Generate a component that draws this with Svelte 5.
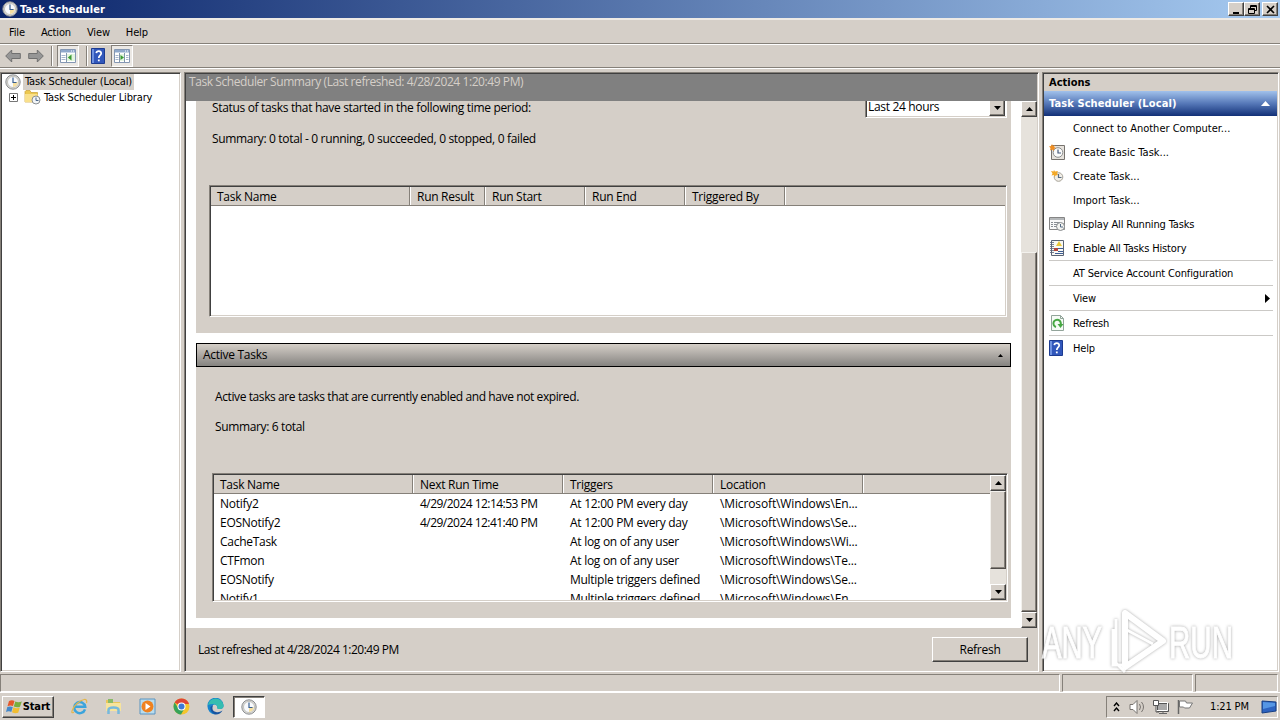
<script>
    const menus = ['File', 'Action', 'View', 'Help'];

    const historyColumns = [
        { label: 'Task Name', width: 200 },
        { label: 'Run Result', width: 75 },
        { label: 'Run Start', width: 100 },
        { label: 'Run End', width: 100 },
        { label: 'Triggered By', width: 100 }
    ];

    const activeColumns = [
        { label: 'Task Name', width: 200 },
        { label: 'Next Run Time', width: 150 },
        { label: 'Triggers', width: 150 },
        { label: 'Location', width: 150 }
    ];

    const tasks = [
        ['Notify2', '4/29/2024 12:14:53 PM', 'At 12:00 PM every day', '\\Microsoft\\Windows\\En...'],
        ['EOSNotify2', '4/29/2024 12:41:40 PM', 'At 12:00 PM every day', '\\Microsoft\\Windows\\Se...'],
        ['CacheTask', '', 'At log on of any user', '\\Microsoft\\Windows\\Wi...'],
        ['CTFmon', '', 'At log on of any user', '\\Microsoft\\Windows\\Te...'],
        ['EOSNotify', '', 'Multiple triggers defined', '\\Microsoft\\Windows\\Se...'],
        ['Notify1', '', 'Multiple triggers defined', '\\Microsoft\\Windows\\En...']
    ];

    const actions = [
        { label: 'Connect to Another Computer...' },
        { label: 'Create Basic Task...', icon: 'basic' },
        { label: 'Create Task...', icon: 'create' },
        { label: 'Import Task...' },
        { label: 'Display All Running Tasks', icon: 'running' },
        { label: 'Enable All Tasks History', icon: 'history' },
        { label: 'AT Service Account Configuration', line: true },
        { label: 'View', line: true, submenu: true },
        { label: 'Refresh', line: true, icon: 'refresh' },
        { label: 'Help', line: true, icon: 'help' }
    ];

    const launchers = ['ie', 'explorer', 'media', 'chrome', 'edge'];
</script>

{#snippet clock()}
    <svg width="16" height="16" viewBox="0 0 16 16">
        <circle cx="8" cy="8" r="7.2" fill="#d9d9d6" stroke="#8b8d90" />
        <circle cx="8" cy="8" r="5.5" fill="#f8fafd" stroke="#b9b8b0" stroke-width=".8" />
        <path d="M8 8h4.8A5 5 0 0 1 8 13z" fill="#f5dfa0" />
        <path d="M8 3.5V8.5H11.5" fill="none" stroke="#395f91" stroke-width="1.2" />
    </svg>
{/snippet}

{#snippet help()}
    <svg width="14" height="16" viewBox="1 0 14 16">
        <path d="M1.5.5h13v15h-13z" fill="#3157bb" stroke="#1c3b91" />
        <path d="M2 1h2v14H2z" fill="#6e91e0" />
        <path d="M6.3 5.2C6.6 2.5 11.3 2.5 11.2 5.4 11.1 7.6 8.8 7.4 8.8 10" fill="none" stroke="#fff" stroke-width="1.7" />
        <path d="M7.9 11.5h1.8v1.8H7.9z" fill="#fff" />
    </svg>
{/snippet}

{#snippet panel(right)}
    <svg width="16" height="14" viewBox="0 0 16 14">
        <path d="M.5.5h15v13H.5z" fill="#fff" stroke="#8497b3" />
        <path d="M1 1h14v2.5H1z" fill="#8fa8cb" />
        <path d="M11 2h1m1 0h1" stroke="#fff" />
        {#if right}
            <path d="M5.5 4v9M10.5 4v9" stroke="#8195ac" />
            <path d="M1.5 6.5h3m-3 2h3m-3 2h3M12 6.5h2.5m-2.5 2h2.5m-2.5 2h2.5" stroke="#a5b5cc" />
            <path d="M6 5h4v7H6z" fill="#e3f5df" /><path d="M6.5 6v5L10 8.5z" fill="#3b9a35" />
        {:else}
            <path d="M6.5 4v9" stroke="#8195ac" />
            <path d="M1.5 6.5h4m-4 2h4m-4 2h4" stroke="#a5b5cc" />
            <path d="M7 5h8v7H7z" fill="#e3f5df" /><path d="M11.5 5.5v6L7.8 8.5z" fill="#3b9a35" />
        {/if}
    </svg>
{/snippet}

{#snippet arrow(dir)}
    <svg width="7" height="4" viewBox="0 0 7 4">
        <path d={dir === 'up' ? 'M0 4h7L3.5 0z' : 'M0 0h7L3.5 4z'} />
    </svg>
{/snippet}

{#snippet actionIcon(name)}
    {#if name === 'help'}
        {@render help()}
    {:else if name}
        <svg width="16" height="16" viewBox="0 0 16 16">
            {#if name === 'basic'}
                <path d="M2.5 1.5h13v14h-13z" fill="#e6e2dc" stroke="#77736e" />
                <circle cx="9" cy="8.5" r="4.8" fill="#fbfbfa" stroke="#8a8c8c" />
                <path d="M9 5.5V9h3" fill="none" stroke="#44597a" stroke-width="1.2" />
                <path d="M3 0l1 2 2-1-1 2 2 1-2 1v2L3 5.500 1 6.500 1.500 4 0 2.500 2 2z" fill="#f08e22" />
            {:else if name === 'create'}
                <circle cx="9.500" cy="9" r="4.300" fill="#f1eee7" stroke="#a7a398" />
                <path d="M9.500 6v3.500h3" fill="none" stroke="#566b83" stroke-width="1.200" />
                <path d="M5 2l1 1.500L9 3 8 5l1 2-2.500.5L5.500 9 5 7l-2.500.5 1-2L2 3l2.500.5z" fill="#f3a928" />
            {:else if name === 'running'}
                <path d="M.5 1.500h15v12H.5z" fill="#f8f8f8" stroke="#858585" />
                <path d="M1 2h14v2H1z" fill="#b5b8ba" />
                <path d="M2 6.500h2m1 0h6M2 8.500h2m1 0h4M2 10.500h2m1 0h3" stroke="#888d92" />
                <circle cx="11.500" cy="10.500" r="4" fill="#f3f3f0" stroke="#85898c" />
                <path d="M11.500 8v3H14" fill="none" stroke="#536a84" />
            {:else if name === 'history'}
                <path d="M2.500.5h12v15h-12z" fill="#f8f8f4" stroke="#596374" />
                <path d="M1 2.500h4m-4 2h4m-4 2h4m-4 2h4m-4 2h4m-4 2h4" stroke="#59647a" stroke-width=".8" />
                <path d="M10 1l3 5H7z" fill="#e9c737" /><path d="M5 8h4v3H5z" fill="#b34639" />
                <path d="M9 8.500h5m-5 3h5m-8 2h8" stroke="#3e5d94" />
            {:else}
                <path d="M2.500.5h9l3 3v12h-12z" fill="#f6fbf6" stroke="#92a49a" />
                <path d="M11.500.5v3h3" fill="none" stroke="#92a49a" />
                <path d="M7 12A3.700 3.700 0 1 1 11.500 10" fill="none" stroke="#46a743" stroke-width="2" />
                <path d="M8.500 9h6l-3 4z" fill="#46a743" />
            {/if}
        </svg>
    {/if}
{/snippet}

<div class="desktop">
    <header class="titlebar">
        {@render clock()}
        <b>Task Scheduler</b>
        <div class="window-buttons">
            <button aria-label="Minimize"><svg width="9" height="9"><path d="M1 7h6v2H1z" /></svg></button>
            <button aria-label="Restore">
                <svg width="9" height="9"><path d="M2.500 3V.5h6v5H6M2 1.500h7M.5 3.500h6v5h-6zM0 4.500h7" fill="none" stroke="#000" /></svg>
            </button>
            <button class="close" aria-label="Close"><svg width="9" height="9"><path d="M1 1l7 7M8 1L1 8" stroke="#000" stroke-width="1.600" /></svg></button>
        </div>
    </header>

    <nav class="menu">
        {#each menus as menu}<span>{menu}</span>{/each}
    </nav>

    <div class="toolbar">
        <svg width="16" height="14" viewBox="0 0 16 14"><path d="M.7 7l6-6v3.500h8.600v5H6.700V13z" fill="#969696" stroke="#707070" /></svg>
        <svg class="forward" width="16" height="14" viewBox="0 0 16 14"><path d="M15.300 7l-6-6v3.500H.7v5h8.600V13z" fill="#969696" stroke="#707070" /></svg>
        <i></i>
        <span class="pressed">{@render panel(false)}</span>
        <i></i>
        <span class="help-tool">{@render help()}</span>
        <span class="pressed">{@render panel(true)}</span>
    </div>

    <main>
        <aside class="tree sunken">
            <div class="tree-row root">{@render clock()}<span>Task Scheduler (Local)</span></div>
            <div class="tree-row child">
                <svg width="9" height="9"><path d="M.5.5h8v8h-8z" fill="#fff" stroke="#777" /><path d="M2 4.500h5M4.500 2v5" stroke="#000" /></svg>
                <svg class="folder" width="17" height="16" viewBox="0 0 17 16">
                    <path d="M1 13V2.500l1-1h4l1 2h6.500V13z" fill="#ecc84f" stroke="#c89e35" stroke-width=".7" />
                    <path d="M1 5h12.500v8H1z" fill="#f9e08b" />
                    <circle cx="12" cy="11" r="4" fill="#f1f4f6" stroke="#8b9094" />
                    <path d="M12 8.500v3h2.500" fill="none" stroke="#4c678c" />
                </svg>
                <span>Task Scheduler Library</span>
            </div>
        </aside>

        <section class="center sunken">
            <h1>Task Scheduler Summary (Last refreshed: 4/28/2024 1:20:49 PM)</h1>
            <div class="scroll-area">
                <div class="content">
                    <div class="card status">
                        <div class="period">
                            <span>Status of tasks that have started in the following time period:</span>
                            <div class="select"><span>Last 24 hours</span><button aria-label="Open">{@render arrow('down')}</button></div>
                        </div>
                        <p>Summary: 0 total - 0 running, 0 succeeded, 0 stopped, 0 failed</p>
                        <div class="list history">
                            <div class="head">
                                {#each historyColumns as col}<span style:width="{col.width}px">{col.label}</span>{/each}
                            </div>
                        </div>
                    </div>
                    <div class="card-title"><span>Active Tasks</span><svg width="5" height="3"><path d="M0 3h5L2.500 0z" /></svg></div>
                    <div class="card active">
                        <p class="about">Active tasks are tasks that are currently enabled and have not expired.</p>
                        <p class="total">Summary: 6 total</p>
                        <div class="list tasks">
                            <div class="table">
                                <div class="head">
                                    {#each activeColumns as col}<span style:width="{col.width}px">{col.label}</span>{/each}
                                </div>
                                {#each tasks as task}
                                    <div class="row">
                                        {#each task as cell, i}<span style:width="{activeColumns[i].width}px">{cell}</span>{/each}
                                    </div>
                                {/each}
                            </div>
                            <div class="scrollbar">
                                <button aria-label="Up">{@render arrow('up')}</button>
                                <div class="thumb small"></div>
                                <div class="space"></div>
                                <button aria-label="Down">{@render arrow('down')}</button>
                            </div>
                        </div>
                    </div>
                </div>
                <div class="scrollbar">
                    <button aria-label="Up">{@render arrow('up')}</button>
                    <div class="space"></div>
                    <div class="thumb large"></div>
                    <button aria-label="Down">{@render arrow('down')}</button>
                </div>
            </div>
            <footer><span>Last refreshed at 4/28/2024 1:20:49 PM</span><button>Refresh</button></footer>
        </section>

        <aside class="actions sunken">
            <h2>Actions</h2>
            <h3><span>Task Scheduler (Local)</span><svg width="9" height="5"><path d="M0 5h9L4.500 0z" fill="#fff" /></svg></h3>
            {#each actions as action}
                <div class="action" class:line={action.line} class:dialog={action.label.endsWith('...')}>
                    <span class="icon">{@render actionIcon(action.icon)}</span>
                    <span>{action.label}</span>
                    {#if action.submenu}<svg class="submenu" width="5" height="9"><path d="M0 0v9l5-4.500z" /></svg>{/if}
                </div>
            {/each}
        </aside>
    </main>

    <div class="statusbar"><span></span><span></span><span></span></div>

    <div class="taskbar">
        <button class="start">
            <svg width="17" height="16" viewBox="0 0 17 16">
                <path d="M3 2Q6 .5 8.500 2L7 7Q4.500 6 1.500 7.200z" fill="#e5582a" />
                <path d="M9.300 2.400Q12 4 15.800 2.500L14 7.800Q11 9 7.800 7.500z" fill="#78ae3d" />
                <path d="M1.300 8Q4 7 6.800 8L5.300 13Q3 11.500 0 13z" fill="#4488ca" />
                <path d="M7.500 8.300Q10.500 9.800 13.800 8.600L12.200 13.800Q9 15 6 13.300z" fill="#f1bd31" />
            </svg>
            <b>Start</b>
        </button>
        <div class="launchers">
            {#each launchers as app}
                <svg width="17" height="17" viewBox="0 0 17 17">
                    {#if app === 'ie'}
                        <path d="M14 11.300A5.500 5.500 0 1 1 14.200 8.800H4" fill="none" stroke="#3ba4dc" stroke-width="2.500" />
                        <path d="M3 14C-1 17 1 10 6 5.500S17-.5 15.500 5" fill="none" stroke="#e3b64c" stroke-width="1.200" />
                    {:else if app === 'explorer'}
                        <path d="M1 2h5l1 2h8v9H1z" fill="#e9c65a" /><path d="M3 1h5v5H3z" fill="#8abb67" />
                        <path d="M1 5h15v8H1z" fill="#f7e49c" />
                        <path d="M3.500 16v-4Q3.500 9.500 8.500 9.500T13.500 12v4" fill="none" stroke="#77b9dc" stroke-width="2.500" />
                    {:else if app === 'media'}
                        <path d="M1 1h15v15H1z" fill="#b9dced" stroke="#5b94c1" />
                        <circle cx="8.500" cy="8.500" r="6" fill="#ef8220" /><path d="M6.500 5v7l5-3.500z" fill="#fff" />
                    {:else if app === 'chrome'}
                        <circle cx="8.500" cy="8.500" r="8" fill="#f4c52c" />
                        <path d="M8.500 8.500L1.600 4.500A8 8 0 0 1 15.400 4.500L16 6H8.500z" fill="#df4636" />
                        <path d="M1.600 4.500A8 8 0 0 0 8 16.500L11.500 10.500 8.500 8.500 5.500 10.500z" fill="#37a35a" />
                        <circle cx="8.500" cy="8.500" r="4" fill="#fff" /><circle cx="8.500" cy="8.500" r="3" fill="#3e79d5" />
                    {:else}
                        <path d="M.5 8.500A8 8 0 0 1 16.500 7Q17 11 12.500 11 9.500 11 10.500 9 9 5.500 6 7 2.500 10 8 16.500A8 8 0 0 1 .5 8.500z" fill="#1683cd" />
                        <path d="M.8 7A8 8 0 0 1 16.500 7Q17 11 12.500 11 9.500 11 10.500 9 9 4 .8 7z" fill="#35bdb0" />
                        <path d="M6 7Q4 13 9 14 12 15 15.500 12.500 13 17 8 16.500 2.500 14 3.500 9z" fill="#1754a0" />
                    {/if}
                </svg>
            {/each}
        </div>
        <button class="running" aria-label="Task Scheduler">{@render clock()}</button>
        <div class="tray">
            <svg width="7" height="10"><path d="M1 4l2.500-3L6 4M1 9l2.500-3L6 9" fill="none" stroke="#000" stroke-width="1.400" /></svg>
            <svg class="speaker" width="17" height="16"><path d="M1 5.500h3l4-4v13l-4-4H1z" fill="#fff" stroke="#77736f" /><path d="M10.500 5q2 3 0 6M12.500 3q4 5 0 10" fill="none" stroke="#77736f" /></svg>
            <svg class="network" width="16" height="16"><path d="M4.500 4.500h11v8h-11z" fill="#aaa" stroke="#555" /><path d="M3.500 3.500h11v8h-11z" fill="none" stroke="#fff" /><path d="M6 14.500h8M10 12v2" stroke="#666" /><path d="M.5 1.500h5v5h-5z" fill="#fff" stroke="#555" /><path d="M3 6v7h3" fill="none" stroke="#555" /></svg>
            <svg class="flag" width="16" height="16"><path d="M1.500 1v14" stroke="#666" stroke-width="1.500" /><path d="M2.500 2h6l1 2h6l-3 5h-5l-1-1h-4z" fill="#fff" stroke="#777" /></svg>
            <span>1:21 PM</span>
            <svg class="show-desktop" width="16" height="14"><path d="M1 1l14 1v9L1 13z" fill="#2d63c0" stroke="#153e83" /><path d="M2 2l12 1v3L2 9z" fill="#5596e4" /></svg>
        </div>
    </div>

    <svg class="watermark" width="200" height="66" viewBox="0 0 200 66">
        <text x="1" y="51" textLength="60" lengthAdjust="spacingAndGlyphs">ANY</text>
        <text x="128" y="51" textLength="64" lengthAdjust="spacingAndGlyphs">RUN</text>
        <path d="M75 12v44l9 9M72 22v36h10" fill="none" stroke-width="3" />
        <path d="M84 6v54l38-26z" fill="none" stroke-width="6" stroke-linejoin="round" />
        <path d="M84 22l28 15" fill="none" stroke-width="3" />
    </svg>
</div>

<style>
    :global(body) {
        overflow: hidden;
    }

    .desktop {
        position: relative;
        display: flex;
        flex-direction: column;
        width: 1280px;
        height: 720px;
        overflow: hidden;
        background: #d5cfc8;
        color: #000;
        font: 11px "DejaVu Sans Condensed", "DejaVu Sans", sans-serif;
        font-stretch: condensed;
        letter-spacing: -0.15px;
        white-space: nowrap;
    }

    .desktop * {
        box-sizing: border-box;
    }

    svg {
        display: block;
        flex: none;
    }

    button {
        display: flex;
        align-items: center;
        justify-content: center;
        padding: 0;
        background: #d5cfc8;
        color: #000;
        font: inherit;
        letter-spacing: inherit;
        border: 1px solid;
        border-color: #fff #404040 #404040 #fff;
        box-shadow: inset -1px -1px #858079;
    }

    .titlebar {
        display: flex;
        align-items: center;
        height: 18px;
        padding: 0 2px;
        gap: 2px;
        background: linear-gradient(90deg, #0a246a, #a6caf0);
        color: #fff;
    }

    .titlebar b {
        letter-spacing: 0.08px;
    }

    .window-buttons {
        display: flex;
        margin-left: auto;
    }

    .window-buttons button {
        width: 16px;
        height: 14px;
    }

    .window-buttons .close {
        margin-left: 2px;
    }

    .menu {
        display: flex;
        align-items: center;
        gap: 16px;
        height: 26px;
        padding: 3px 9px 0;
        border-bottom: 1px solid #858079;
        box-shadow: inset 0 2px #eeeae5;
    }

    .toolbar {
        display: flex;
        align-items: center;
        height: 24px;
        padding-left: 5px;
        border-top: 1px solid #fff;
        border-bottom: 1px solid #858079;
    }

    .toolbar i {
        width: 2px;
        height: 20px;
        margin: 0 4px 0 7px;
        border-left: 1px solid #858079;
        border-right: 1px solid #fff;
    }

    .forward {
        margin-left: 7px;
    }

    .toolbar .help-tool {
        margin: 0 6px 0 -1px;
    }

    .pressed {
        display: grid;
        place-items: center;
        width: 22px;
        height: 22px;
        background: #ebe8e4;
        border: 1px solid;
        border-color: #858079 #fff #fff #858079;
    }

    main {
        display: flex;
        gap: 3px;
        height: 604px;
        padding-top: 3px;
        border-top: 1px solid #fff;
    }

    .sunken,
    .list {
        padding: 1px;
        background: #fff;
        border: 1px solid;
        border-color: #858079 #fff #fff #858079;
        box-shadow: inset 1px 1px #404040, inset -1px -1px #d5cfc8;
    }

    .tree {
        width: 181px;
    }

    .tree-row {
        display: flex;
        align-items: center;
        height: 16px;
    }

    .root {
        height: 15px;
        padding-left: 3px;
        gap: 2px;
    }

    .root span {
        padding: 0 2px;
        line-height: 16px;
        background: #d5cfc8;
    }

    .child {
        padding-left: 7px;
    }

    .folder {
        margin: 0 3px 0 6px;
    }

    .center {
        display: flex;
        flex-direction: column;
        width: 855px;
        font: 12px "Open Sans", "Noto Sans", sans-serif;
        letter-spacing: -0.28px;
    }

    h1 {
        height: 27px;
        margin: 0;
        padding: 0 3px;
        background: #808080;
        color: #d5cfc8;
        font: inherit;
        letter-spacing: -0.42px;
        line-height: 15px;
    }

    .scroll-area {
        display: flex;
        height: 527px;
    }

    .content {
        flex: 1;
        padding: 0 10px;
    }

    .card {
        background: #d5cfc8;
    }

    .status {
        height: 232px;
        padding: 0 4px 0 13px;
    }

    .period {
        display: flex;
        height: 17px;
        padding-left: 3px;
        letter-spacing: -0.33px;
        line-height: 14px;
    }

    .select {
        display: flex;
        width: 142px;
        margin-left: auto;
        padding-left: 2px;
        background: #fff;
        border-left: 1px solid #858079;
        border-right: 1px solid #fff;
        border-bottom: 1px solid #fff;
        box-shadow: inset 1px 0 #404040, inset 0 -1px #d5cfc8;
        line-height: 12px;
    }

    .select span {
        flex: 1;
    }

    .select button {
        width: 16px;
        height: 15px;
        margin-right: 1px;
        border-top: 0;
    }

    p {
        margin: 0;
    }

    .status p {
        padding: 13px 0 0 3px;
        height: 67px;
        letter-spacing: -0.33px;
        line-height: 16px;
    }

    .history {
        height: 132px;
    }

    .head {
        display: flex;
        height: 19px;
        background: #d5cfc8;
        border-bottom: 1px solid #858079;
        line-height: 20px;
    }

    .head span {
        padding-left: 7px;
        border-right: 1px solid #858079;
        box-shadow: 1px 0 #fff;
    }

    .head span:first-child {
        margin-left: -1px;
    }

    .card-title {
        display: flex;
        align-items: center;
        justify-content: space-between;
        height: 24px;
        margin-top: 10px;
        padding: 0 7px 2px 6px;
        border: 1px solid #000;
        background: linear-gradient(#d5cfc8, #858380);
    }

    .card-title svg {
        margin-top: 3px;
    }

    .active {
        height: 251px;
        padding: 22px 3px 0 16px;
        line-height: 16px;
    }

    .active p {
        padding-left: 3px;
    }

    .active .about {
        letter-spacing: -0.4px;
    }

    .active .total {
        margin-top: 14px;
        margin-bottom: 38px;
        letter-spacing: -0.36px;
    }

    .tasks {
        display: flex;
        height: 129px;
        overflow: hidden;
    }

    .table {
        flex: 1;
        overflow: hidden;
    }

    .row {
        display: flex;
        height: 19px;
        line-height: 20px;
    }

    .row span {
        padding-left: 6px;
    }

    .row span:nth-child(2) {
        letter-spacing: -0.53px;
    }

    .row span:nth-child(4) {
        letter-spacing: -0.13px;
    }

    .scrollbar {
        display: flex;
        flex-direction: column;
        width: 16px;
        background: repeating-conic-gradient(#d5cfc8 0 25%, #f6f4f0 0 50%) 0 / 2px 2px;
    }

    .scrollbar button {
        height: 16px;
    }

    .space {
        flex: 1;
    }

    .thumb {
        background: #d5cfc8;
        border: 1px solid;
        border-color: #f3f1ed #504c49 #504c49 #f3f1ed;
        box-shadow: inset -1px -1px #858079;
    }

    .small {
        height: 78px;
    }

    .large {
        height: 360px;
    }

    footer {
        display: flex;
        align-items: center;
        justify-content: space-between;
        flex: 1;
        padding: 0 9px 0 12px;
        background: #d5cfc8;
    }

    footer span {
        letter-spacing: -0.49px;
    }

    footer button {
        width: 96px;
        height: 25px;
    }

    .actions {
        width: 237px;
    }

    h2,
    h3 {
        margin: 0;
        font: inherit;
        font-weight: bold;
        letter-spacing: 0;
    }

    h2 {
        height: 17px;
        padding-left: 5px;
        background: #d5cfc8;
        line-height: 17px;
    }

    h3 {
        display: flex;
        align-items: center;
        justify-content: space-between;
        height: 25px;
        padding: 0 7px 0 5px;
        color: #fff;
        background: linear-gradient(#a1c1eb, #5678b8 50%, #123077);
        letter-spacing: 0.1px;
    }

    .action {
        display: flex;
        align-items: center;
        height: 24px;
        margin: 0 4px 0 5px;
    }

    .dialog {
        letter-spacing: 0;
    }

    .line {
        height: 25px;
        border-top: 1px solid #cbc9c6;
    }

    .icon {
        width: 24px;
    }

    .submenu {
        margin-left: auto;
        margin-right: 3px;
    }

    .statusbar {
        display: flex;
        gap: 2px;
        height: 20px;
        padding: 2px 2px 0 0;
    }

    .statusbar span {
        width: 1060px;
        border: 1px solid;
        border-color: #858079 #fff #fff #858079;
    }

    .statusbar span:nth-child(2) {
        width: 131px;
    }

    .statusbar span:nth-child(3) {
        flex: 1;
    }

    .taskbar {
        display: flex;
        align-items: center;
        flex: 1;
        padding: 0 2px;
        border-top: 1px solid #fff;
    }

    .start {
        width: 52px;
        height: 22px;
    }

    .launchers {
        display: flex;
        gap: 17px;
        padding-left: 17px;
    }

    .running {
        width: 32px;
        height: 22px;
        margin-left: 9px;
        background: #fff;
        border-color: #404040 #fff #fff #404040;
        box-shadow: inset 1px 1px #858079;
    }

    .tray {
        display: flex;
        align-items: center;
        width: 172px;
        height: 22px;
        margin-left: auto;
        padding-left: 6px;
        border: 1px solid;
        border-color: #858079 #fff #fff #858079;
    }

    .speaker {
        margin-left: 9px;
    }

    .network {
        margin-left: 7px;
    }

    .flag {
        margin: 0 17px 0 8px;
    }

    .show-desktop {
        margin-left: auto;
    }

    .watermark {
        position: absolute;
        left: 1041px;
        top: 607px;
        overflow: visible;
        pointer-events: none;
        fill: #fff;
        stroke: #fff;
        opacity: 0.85;
        font: 44px "Liberation Sans", sans-serif;
        letter-spacing: 0;
        filter: drop-shadow(0 0 1.5px #999);
    }
</style>
